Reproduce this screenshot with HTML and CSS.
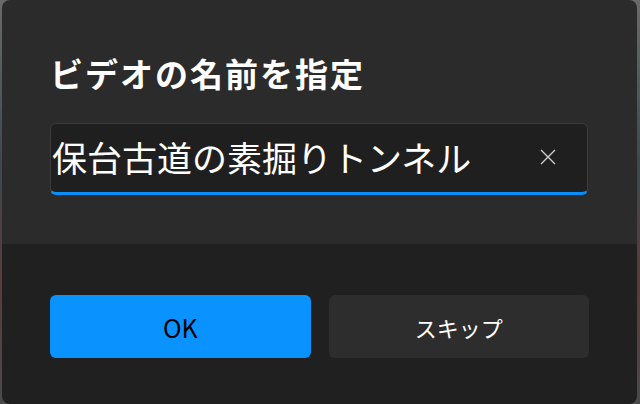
FILE: index.html
```html
<!DOCTYPE HTML>
<html>
<head>
<meta charset="utf-8">
<link rel="stylesheet" href="styles.css">
</head>
<body>
<div class="dialog">
  <!--top part: title and name field-->
  <div class="content">
    <h1 class="title">ビデオの名前を指定</h1>
    <div class="field">
      <span class="value">保台古道の素掘りトンネル</span>
      <svg class="clear" width="16" height="16" viewBox="0 0 16 16">
        <path d="M1 1 L15 15 M15 1 L1 15" stroke="#cfcfcf" stroke-width="1.4" fill="none"/>
      </svg>
    </div>
  </div>
  <!--bottom part: buttons-->
  <div class="footer">
    <div class="btn btn-ok">OK</div>
    <div class="btn btn-skip">スキップ</div>
  </div>
</div>
</body>
</html>
```

FILE: styles.css
```css
html, body
{
  margin: 0;
  height: 100%;
}
body
{
  background: linear-gradient(#6a6a6a, #3c4a4e 40%, #5a3a3c 70%, #4a4a4a);
  font-family: "Noto Sans CJK JP", "Noto Sans", sans-serif;
  overflow: hidden;
}
.dialog
{
  margin-left: 2px;
  width: 635px;
  height: 404px;
  border-radius: 8px;
  overflow: hidden;
  display: flex;
  flex-direction: column;
}
.content
{
  background: #2b2b2b;
  height: 244px;
  padding: 0 49px 0 48px;
  box-sizing: border-box;
}
.title
{
  margin: 0;
  padding-top: 47px;
  font-size: 33px;
  line-height: 52px;
  font-weight: bold;
  letter-spacing: 2px;
  color: #fff;
}
.field
{
  margin-top: 24px;
  height: 72px;
  box-sizing: border-box;
  background: #1f1f1f;
  border: 1px solid #3a3a3a;
  border-bottom: 3px solid #0a8ff8;
  border-radius: 6px;
  display: flex;
  align-items: center;
  padding-left: 1px;
}
.value
{
  flex: 1;
  color: #fff;
  font-size: 35px;
  line-height: 50px;
  white-space: nowrap;
  margin-top: -2px;
}
.clear
{
  margin: 0 31px 2px 0;
}
.footer
{
  flex: 1;
  background: #202020;
  display: flex;
  gap: 18px;
  padding: 51px 48px 0 48px;
}
.btn
{
  width: 261px;
  height: 63px;
  border-radius: 6px;
  display: flex;
  align-items: center;
  justify-content: center;
  font-size: 22px;
}
.btn-ok
{
  background: #0a93fe;
  color: #000;
  font-size: 25px;
}
.btn-skip
{
  background: #2d2d2d;
  color: #fff;
}
```
